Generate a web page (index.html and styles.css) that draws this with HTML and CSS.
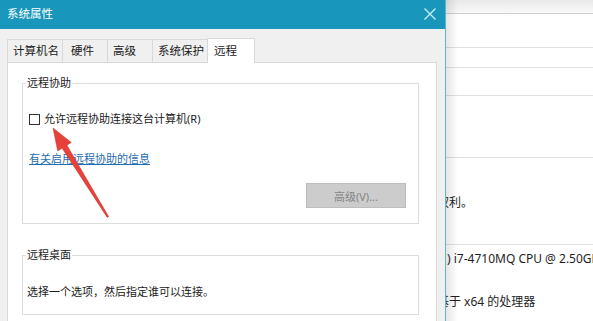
FILE: index.html
```html
<!DOCTYPE html>
<html lang="zh-CN">
<head>
<meta charset="utf-8">
<title>系统属性</title>
<link rel="stylesheet" href="styles.css">
</head>
<body>
<div class="screen">
  <div class="dialog">
    <div class="titlebar">
      <span class="title">系统属性</span>
      <svg class="close" width="12" height="12" viewBox="0 0 12 12"><path d="M0.5 0.5 L11.5 11.5 M11.5 0.5 L0.5 11.5" stroke="#c9eef6" stroke-width="1.3" fill="none"/></svg>
    </div>
    <div class="dlg-body">
      <div class="tabs">
        <div class="tab w55">计算机名</div>
        <div class="tab w45 pl8">硬件</div>
        <div class="tab w45">高级</div>
        <div class="tab w55">系统保护</div>
        <div class="tab active">远程</div>
      </div>
      <div class="panel">
        <fieldset class="group g1">
          <legend>远程协助</legend>
          <div class="check"><span class="box"></span><span>允许远程协助连接这台计算机(R)</span></div>
          <a class="link" href="#">有关启用远程协助的信息</a>
          <div class="btn-row"><button class="btn" disabled>高级(V)...</button></div>
        </fieldset>
        <fieldset class="group g2">
          <legend>远程桌面</legend>
          <p class="desc">选择一个选项，然后指定谁可以连接。</p>
        </fieldset>
      </div>
    </div>
  </div>
  <div class="backwin">
    <div class="row r0"></div>
    <div class="row r1"></div>
    <div class="row r2"></div>
    <div class="row r3"></div>
    <div class="row r4"></div>
    <div class="row r5"><div class="txt cut">权利。</div></div>
    <div class="row r6">
      <div class="txt">) i7-4710MQ CPU @ 2.50GHz</div>
      <div class="txt cut2 gap">基于 x64 的处理器</div>
    </div>
  </div>
  <svg class="arrow" width="593" height="321" viewBox="0 0 593 321">
    <polygon points="53,128 71.3,142.5 66.9,145.2 108.6,216.6 107.2,217.4 62.1,148.2 57.7,150.9" fill="#e6423b" stroke="#c92f2a" stroke-width="0.5"/>
  </svg>
</div>
</body>
</html>
```

FILE: styles.css
```css
html, body {
  margin: 0;
  padding: 0;
}
body {
  width: 593px;
  height: 321px;
  overflow: hidden;
  background: #ffffff;
  font-family: "Noto Sans", "Noto Sans CJK SC", sans-serif;
  font-size: 11px;
  color: #1a1a1a;
}
.screen {
  position: relative;
  display: flex;
  width: 593px;
  height: 321px;
  overflow: hidden;
}
.dialog {
  width: 445px;
  flex: none;
  display: flex;
  flex-direction: column;
  background: #f0f0f0;
  border-right: 1px solid #62b3c6;
}
.titlebar {
  height: 29px;
  flex: none;
  background: #1996bb;
  display: flex;
  align-items: center;
  justify-content: space-between;
  padding: 0 9px 1px 7px;
  box-sizing: border-box;
}
.title {
  color: #ffffff;
  font-size: 11.5px;
  line-height: 14px;
}
.close {
  display: block;
}
.dlg-body {
  padding: 10px 8px 0 7px;
  flex: 1;
}
.tabs {
  display: flex;
  height: 23px;
}
.tab {
  box-sizing: border-box;
  height: 23px;
  border: 1px solid #d9d9d9;
  border-right: none;
  border-bottom: none;
  padding-left: 5px;
  font-size: 11.5px;
  line-height: 21px;
  background: #f0f0f0;
  white-space: nowrap;
}
.w55 { width: 55px; }
.w45 { width: 45px; }
.pl8 { padding-left: 8px; }
.tab.active {
  width: 48px;
  height: 25px;
  margin-top: -1px;
  padding-left: 6px;
  line-height: 23px;
  background: #ffffff;
  border-right: 1px solid #d9d9d9;
  position: relative;
  z-index: 1;
}
.panel {
  background: #ffffff;
  border: 1px solid #d9d9d9;
  padding: 13px 17px 0 14px;
  height: 300px;
}
.group {
  margin: 0;
  border: 1px solid #dcdcdc;
  padding: 0 12px 15px 3px;
  min-width: 0;
}
.group legend {
  padding: 0 1px;
  font-size: 11px;
  line-height: 14px;
  color: #1a1a1a;
}
.check {
  display: flex;
  align-items: center;
  height: 14px;
  margin: 22px 0 0 3px;
  line-height: 14px;
}
.box {
  width: 11px;
  height: 11px;
  box-sizing: border-box;
  border: 1px solid #333333;
  background: #ffffff;
  margin-right: 4px;
  flex: none;
}
.link {
  display: block;
  width: max-content;
  margin: 26px 0 0 3px;
  line-height: 14px;
  color: #1f6db3;
  text-decoration: underline;
}
.btn-row {
  display: flex;
  justify-content: flex-end;
  margin-top: 17px;
}
.btn {
  width: 100px;
  height: 25px;
  box-sizing: border-box;
  border: 1px solid #bdbdbd;
  background: #cccccc;
  color: #858585;
  font-family: "Noto Sans", "Noto Sans CJK SC", sans-serif;
  font-size: 11px;
  padding: 0;
}
.g2 {
  margin-top: 24px;
}
.desc {
  margin: 23px 0 0 1px;
  line-height: 14px;
}
.backwin {
  flex: 1;
  position: relative;
  overflow: hidden;
  background: #ffffff;
  font-size: 12px;
  color: #1e1e1e;
}
.backwin::before {
  content: "";
  position: absolute;
  left: 0;
  top: 0;
  bottom: 0;
  width: 12px;
  background: linear-gradient(to right, rgba(0, 0, 0, 0.1), rgba(0, 0, 0, 0));
}
.row {
  border-bottom: 1px solid #e0e0e0;
}
.r0 {
  height: 13px;
  background: linear-gradient(to bottom, #e9e9e9, #f8f8f8);
  border-bottom-color: #cfcfcf;
}
.r1 { height: 33px; }
.r2 { height: 19px; }
.r3 { height: 27px; }
.r4 { height: 61px; }
.r5 { height: 87px; box-sizing: border-box; }
.r5 .txt { padding-top: 37px; }
.r6 { border-bottom: none; padding-top: 6px; }
.txt {
  line-height: 16px;
  white-space: nowrap;
  padding-left: 1px;
}
.cut { margin-left: -10px; }
.cut2 { margin-left: -10px; }
.gap { margin-top: 27px; }
.arrow {
  position: absolute;
  left: 0;
  top: 0;
  pointer-events: none;
}
```
